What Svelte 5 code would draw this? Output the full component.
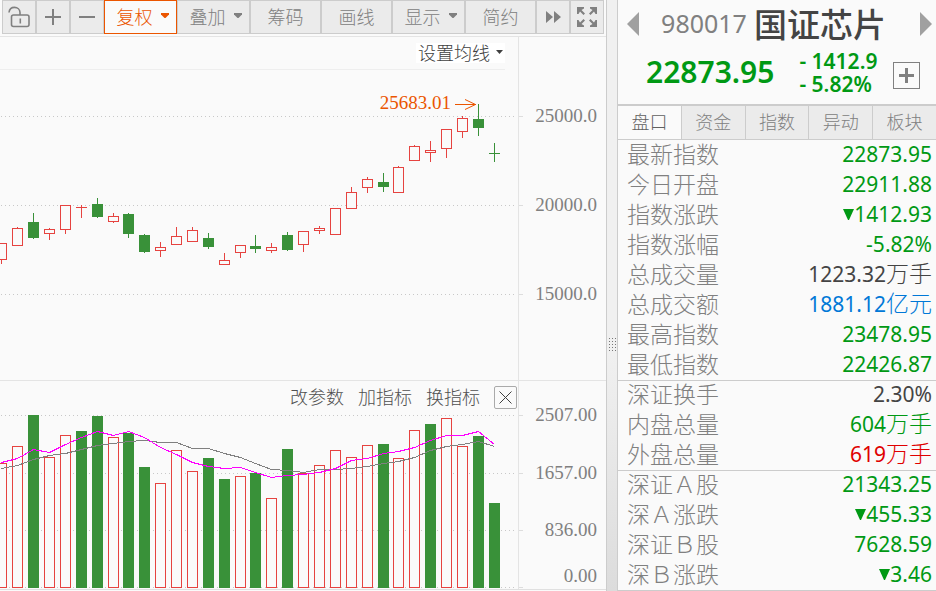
<script>
  const tools = [
    { label: '复权', menu: true, active: true },
    { label: '叠加', menu: true },
    { label: '筹码' },
    { label: '画线' },
    { label: '显示', menu: true },
    { label: '简约' }
  ];

  // x, body top, body bottom, wick top, wick bottom, falling
  const candles = [
    [-4, 243, 260, 243, 264, 0], [12, 228, 246, 227, 246, 0], [28, 222, 238, 213, 239, 1],
    [44, 229, 234, 228, 240, 0], [60, 205, 230, 205, 234, 0], [76, 207, 208, 205, 218, 0],
    [92, 204, 217, 198, 218, 1], [108, 216, 222, 213, 223, 0], [123, 214, 234, 213, 238, 1],
    [139, 235, 252, 234, 253, 1], [155, 247, 251, 242, 257, 0], [171, 236, 245, 227, 245, 0],
    [187, 230, 242, 227, 242, 0], [203, 238, 247, 233, 249, 1], [219, 260, 265, 253, 265, 0],
    [235, 245, 253, 245, 258, 0], [250, 246, 249, 235, 253, 1], [266, 247, 251, 243, 253, 0],
    [282, 235, 250, 232, 251, 1], [298, 231, 245, 231, 252, 0], [314, 228, 231, 226, 234, 0],
    [330, 208, 235, 208, 235, 0], [346, 192, 209, 187, 209, 0], [362, 179, 188, 177, 193, 0],
    [378, 182, 187, 173, 192, 1], [393, 167, 193, 166, 193, 0], [409, 146, 161, 145, 161, 0],
    [425, 150, 153, 141, 162, 0], [441, 129, 149, 129, 158, 0], [457, 118, 132, 116, 138, 0],
    [473, 119, 128, 104, 136, 1], [489, 153, 154, 143, 162, 1]
  ];

  const volumeTops = [
    463, 446, 415, 457, 435, 431, 416, 437, 433, 467, 483, 450, 471, 458, 479, 476,
    473, 498, 449, 473, 465, 450, 457, 445, 444, 458, 430, 424, 418, 446, 436, 503
  ];
  const volumeDown = new Set([2, 5, 6, 8, 9, 13, 14, 16, 18, 24, 27, 30, 31]);
  const fast = [
    462, 458, 449, 452, 444, 437, 431, 435, 431, 437, 447, 454, 462, 466, 468, 467,
    472, 477, 475, 474, 472, 468, 460, 458, 453, 451, 447, 440, 435, 435, 431, 444
  ];
  const slow = [
    468, 465, 459, 455, 453, 449, 445, 443, 441, 440, 442, 442, 448, 448, 453, 457,
    463, 469, 470, 472, 469, 469, 468, 466, 463, 461, 457, 450, 446, 444, 441, 446
  ];
  const line = (ys) => ys.map((y, i) => `${candles[i][0] + 5.5},${y + 0.5}`).join(' ');

  const priceAxis = [[116, '25000.0', 122], [205, '20000.0', 211], [294, '15000.0', 300]];
  const volumeAxis = [[415, '2507.00', 421], [473, '1657.00', 479], [530, '836.00', 536], [587, '0.00', 582]];

  const tabs = ['盘口', '资金', '指数', '异动', '板块'];
  const groups = [
    [
      ['最新指数', '22873.95', '', 'down'],
      ['今日开盘', '22911.88', '', 'down'],
      ['指数涨跌', '1412.93', '', 'down', true],
      ['指数涨幅', '-5.82%', '', 'down'],
      ['总成交量', '1223.32', '万手', 'plain'],
      ['总成交额', '1881.12', '亿元', 'info'],
      ['最高指数', '23478.95', '', 'down'],
      ['最低指数', '22426.87', '', 'down']
    ],
    [
      ['深证换手', '2.30%', '', 'plain'],
      ['内盘总量', '604', '万手', 'down'],
      ['外盘总量', '619', '万手', 'up']
    ],
    [
      ['深证Ａ股', '21343.25', '', 'down'],
      ['深Ａ涨跌', '455.33', '', 'down', true],
      ['深证Ｂ股', '7628.59', '', 'down'],
      ['深Ｂ涨跌', '3.46', '', 'down', true]
    ]
  ];
</script>

{#snippet grid(rows)}
  {#each rows as [y, label, base]}
    <line class="dots" x1="1" x2="515" y1={y + 0.5} y2={y + 0.5} />
    <line class="tick" x1="519" x2="523" y1={y + 0.5} y2={y + 0.5} />
    <text class="axis" x="597" y={base} text-anchor="end">{label}</text>
  {/each}
{/snippet}

<main>
  <section class="charts">
    <div class="toolbar">
      <button class="tool icon" aria-label="解锁">
        <svg width="22" height="22" viewBox="0 0 22 22" fill="none" stroke="#808080" stroke-width="1.6">
          <path d="M1 6.500C1.400 3 3.600 1.400 6.500 1.400S12 3.300 12 6.500V9" />
          <rect x="3.500" y="9" width="17.500" height="11.500" rx="2" />
          <path d="M12.300 12.500v5" />
        </svg>
      </button>
      <button class="tool icon" aria-label="放大">
        <svg width="18" height="18" viewBox="0 0 18 18" stroke="#808080" stroke-width="2"><path d="M1 9h16M9 1v16" /></svg>
      </button>
      <button class="tool icon" aria-label="缩小">
        <svg width="18" height="18" viewBox="0 0 18 18" stroke="#808080" stroke-width="2"><path d="M1 9h16" /></svg>
      </button>
      {#each tools as t}
        <button class="tool" class:menu={t.menu} class:active={t.active}>
          {t.label}
          {#if t.menu}<svg width="8" height="5" viewBox="0 0 8 5" fill="currentColor"><path d="M0 0h8v1.500L4.500 5h-1L0 1.500z" /></svg>{/if}
        </button>
      {/each}
      <button class="tool icon" aria-label="更多">
        <svg width="16" height="12" viewBox="0 0 16 12" fill="#808080"><path d="M1 0l7 6-7 6zM9 0l7 6-7 6z" /></svg>
      </button>
      <button class="tool icon" aria-label="全屏">
        <svg width="22" height="22" viewBox="0 0 22 22" fill="#808080">
          {#each [0, 90, 180, 270] as turn}
            <path transform="rotate({turn} 11 11)" d="M1 1h7v1.500L5.500 4 9 7.500 7.500 9 4 5.500 2.500 8H1z" />
          {/each}
        </svg>
      </button>
    </div>

    <div class="head">
      <div class="ruled">
        <button class="average">设置均线
          <svg width="7" height="4" viewBox="0 0 7 4" fill="#404040"><path d="M0 0h7L3.500 4z" /></svg>
        </button>
      </div>
      <div class="gutter"></div>
    </div>
    <svg class="plot" viewBox="0 70 606 310" role="img" aria-label="K线">
      <path class="frame" d="M518.500 70v310" />
      {@render grid(priceAxis)}
      {#each candles as [x, top, bottom, high, low, down]}
        <g fill={down ? '#399139' : '#e64340'} shape-rendering="crispEdges">
          <rect x={x + 5} y={high} width="1" height={low - high} />
          <rect {x} y={top} width="11" height={bottom - top} />
          {#if !down && bottom - top > 2}
            <rect x={x + 1} y={top + 1} width="9" height={bottom - top - 2} fill="#fafafa" />
          {/if}
        </g>
      {/each}
      <text class="axis peak" x="451" y="109" text-anchor="end">25683.01</text>
      <path d="M455 104.500h21M465 99.500l10.500 5-10.500 5" fill="none" stroke="#eb5500" />
    </svg>

    <div class="head lower">
      <div class="actions">
        <button>改参数</button>
        <button>加指标</button>
        <button>换指标</button>
        <button class="close" aria-label="关闭">
          <svg width="13" height="13" viewBox="0 0 13 13" stroke="#404040"><path d="M.5.5l12 12M12.500.5l-12 12" /></svg>
        </button>
      </div>
      <div class="gutter"></div>
    </div>
    <svg class="plot last" viewBox="0 409 606 180" role="img" aria-label="成交量">
      <path class="frame" d="M518.500 409v180" />
      {@render grid(volumeAxis)}
      {#each volumeTops as top, i}
        {@const x = candles[i][0]}
        {#if volumeDown.has(i)}
          <rect {x} y={top} width="11" height={588 - top} fill="#399139" />
        {:else}
          <rect x={x + 0.5} y={top + 0.5} width="10" height={587 - top} fill="#fafafa" stroke="#e64340" />
        {/if}
      {/each}
      <polyline points={line(slow)} fill="none" stroke="#808080" shape-rendering="crispEdges" />
      <polyline points={line(fast)} fill="none" stroke="#f0f" shape-rendering="crispEdges" />
    </svg>
  </section>

  <div class="splitter">
    <svg width="8" height="14" viewBox="0 0 8 14" fill="#777">
      {#each [0, 3, 6, 9, 12] as y}
        {#each [1, 4, 7] as x}<rect {x} {y} width="1" height="1" />{/each}
      {/each}
    </svg>
  </div>

  <section class="quote">
    <header>
      <div class="title">
        <button aria-label="上一个"><svg width="12" height="24" viewBox="0 0 12 24" fill="#a0a0a0"><path d="M12 0v24L0 12z" /></svg></button>
        <h1><span>980017</span> 国证芯片</h1>
        <button aria-label="下一个"><svg width="12" height="24" viewBox="0 0 12 24" fill="#a0a0a0"><path d="M0 0v24l12-12z" /></svg></button>
      </div>
      <div class="price">
        <strong>22873.95</strong>
        <div class="change"><span>- 1412.9</span><span>- 5.82%</span></div>
        <button class="add" aria-label="加自选">
          <svg width="15" height="15" viewBox="0 0 15 15" stroke="#808080" stroke-width="3"><path d="M0 7.500h15M7.500 0v15" /></svg>
        </button>
      </div>
    </header>
    <nav>
      {#each tabs as tab, i}<button class:on={i === 0}>{tab}</button>{/each}
    </nav>
    <table>
      {#each groups as rows}
        <tbody>
          {#each rows as [name, value, unit, tone, falling]}
            <tr>
              <th scope="row">{name}</th>
              <td class={tone}>{#if falling}<svg width="11" height="11" viewBox="0 0 11 11" fill="currentColor"><path d="M0 0h11L6 11H5z" /></svg>{/if}{value}{#if unit}<span>{unit}</span>{/if}</td>
            </tr>
          {/each}
        </tbody>
      {/each}
    </table>
  </section>
</main>

<style>
  :global(body) { margin: 0; background: #fafafa; }
  main {
    display: grid;
    grid-template-columns: minmax(0, 101fr) 12px minmax(0, 53fr);
    min-height: 100vh;
    overflow: hidden;
    background: #fafafa;
    color: #808080;
    font-family: "Noto Sans CJK SC", sans-serif;
    font-weight: 300;
  }
  button {
    box-sizing: border-box;
    margin: 0;
    padding: 0;
    border: 0;
    background: none;
    color: inherit;
    font: inherit;
    line-height: 1;
  }
  svg { flex: none; }

  .toolbar {
    display: flex;
    box-sizing: border-box;
    height: 37px;
    padding: 0 2px 3px;
    border-bottom: 1px solid #e4e4e4;
  }
  .tool {
    display: flex;
    flex: 1 1 71px;
    align-items: center;
    justify-content: center;
    gap: 8px;
    height: 34px;
    padding-bottom: 3px;
    border: 1px solid #ccc;
    background: #ebebeb;
    font-size: 18px;
    white-space: nowrap;
  }
  .tool.menu { flex-basis: 73px; padding-left: 4px; }
  .tool.icon { flex: 0 0 34px; padding: 0; }
  .tool.active { border-color: #eb5500; background: #fafafa; color: #eb5500; }

  .head { display: grid; grid-template-columns: 518fr 88fr; height: 33px; }
  .gutter { border-left: 1px solid #e4e4e4; }
  .ruled {
    display: flex;
    align-items: center;
    justify-content: flex-end;
    margin-right: 13px;
    border-bottom: 1px solid #eee;
  }
  .average {
    display: flex;
    align-items: center;
    gap: 6px;
    height: 20px;
    padding: 0 2px 3px;
    background: #fff;
    color: #404040;
    font-size: 18px;
  }
  .lower { height: 28px; border-top: 1px solid #e4e4e4; }
  .actions {
    display: flex;
    align-items: center;
    justify-content: flex-end;
    gap: 14px;
    padding: 5px 1px 0 0;
    color: #505050;
    font-size: 18px;
  }
  .actions button { height: 23px; padding-bottom: 4px; }
  .actions .close {
    display: grid;
    place-items: center;
    width: 23px;
    padding: 0;
    border: 1px solid #aaa;
    border-radius: 2px;
  }
  .plot { display: block; width: 100%; height: auto; overflow: visible; }
  .last { border-bottom: 1px solid #e0e0e0; }
  .frame { stroke: #e4e4e4; }
  .dots { stroke: #c8c8c8; stroke-dasharray: 1 3; }
  .tick { stroke: #ddd; }
  .axis { fill: #808080; font: 400 19px "Liberation Serif", serif; }
  .peak { fill: #eb5500; }

  .splitter {
    display: grid;
    place-items: center;
    box-sizing: border-box;
    padding-top: 98px;
    border: solid #ccc;
    border-width: 0 1px;
    background: linear-gradient(#f0f0f0 60%, #dcdcdc);
  }

  header { box-sizing: border-box; height: 106px; border-bottom: 2px solid #ccc; }
  .title {
    display: flex;
    align-items: center;
    justify-content: space-between;
    height: 48px;
    padding: 0 4px 0 9px;
  }
  .title button { display: flex; }
  h1 {
    display: flex;
    align-items: center;
    gap: 7px;
    margin: 0;
    padding: 0 12px 2px 0;
    color: #444;
    font-size: 33px;
    font-weight: 500;
    line-height: 46px;
    white-space: nowrap;
  }
  h1 span { color: #808080; font: 400 25px/46px "Noto Sans", sans-serif; }
  .price {
    display: flex;
    align-items: center;
    padding: 0 16px 0 28px;
    color: #009914;
    font-family: "Noto Sans", sans-serif;
  }
  .price strong { font-size: 30px; font-weight: 600; line-height: 46px; }
  .change {
    display: flex;
    flex-direction: column;
    margin: 2px 0 0 25px;
    font-size: 21px;
    font-weight: 600;
    line-height: 23px;
    white-space: nowrap;
  }
  .add {
    display: grid;
    place-items: center;
    width: 27px;
    height: 27px;
    margin: 7px 0 0 auto;
    border: 1px solid #808080;
  }

  nav { display: flex; height: 33px; border-bottom: 1px solid #ccc; }
  nav button {
    flex: 1;
    padding-bottom: 3px;
    border-right: 1px solid #ccc;
    background: #ebebeb;
    font-size: 18px;
  }
  nav button:last-child { border-right: 0; }
  nav .on { background: #fafafa; color: #606060; }

  table { width: 100%; border-spacing: 0; border-bottom: 1px solid #ccc; }
  tr { height: 30px; }
  th, td {
    box-sizing: border-box;
    height: 30px;
    padding: 0;
    border-top: 1px solid transparent;
    vertical-align: top;
    white-space: nowrap;
  }
  tbody + tbody tr:first-child > * { border-top-color: #ccc; }
  th { padding-left: 9px; font-size: 23px; font-weight: 300; line-height: 25px; text-align: left; }
  td { padding-right: 4px; font: 400 21px/27px "Noto Sans", sans-serif; text-align: right; }
  td svg { vertical-align: 2px; }
  td span { font: 300 23px/23px "Noto Sans CJK SC", sans-serif; }
  .down { color: #009914; }
  .up { color: #e00000; }
  .info { color: #0078d7; }
  .plain { color: #444; }
</style>
